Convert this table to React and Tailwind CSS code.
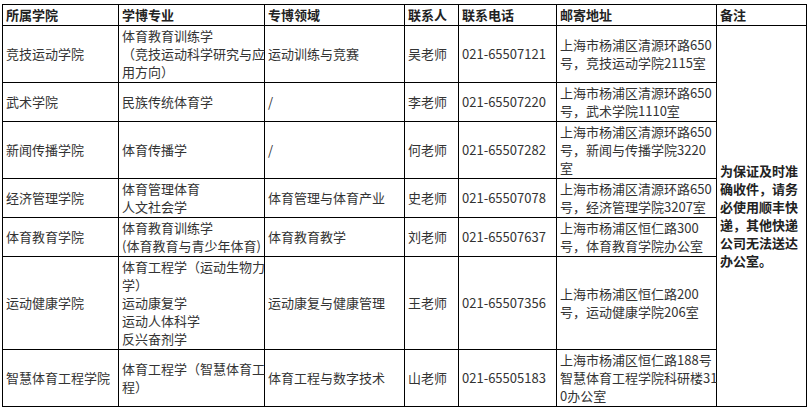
const ROWS = [
  {
    school: '竞技运动学院',
    major: ['体育教育训练学', '（竞技运动科学研究与应', '用方向）'],
    field: ['运动训练与竞赛'],
    contact: '吴老师',
    phone: '021-65507121',
    address: ['上海市杨浦区清源环路650', '号，竞技运动学院2115室'],
  },
  {
    school: '武术学院',
    major: ['民族传统体育学'],
    field: ['/'],
    contact: '李老师',
    phone: '021-65507220',
    address: ['上海市杨浦区清源环路650', '号，武术学院1110室'],
  },
  {
    school: '新闻传播学院',
    major: ['体育传播学'],
    field: ['/'],
    contact: '何老师',
    phone: '021-65507282',
    address: ['上海市杨浦区清源环路650', '号，新闻与传播学院3220', '室'],
  },
  {
    school: '经济管理学院',
    major: ['体育管理体育', '人文社会学'],
    field: ['体育管理与体育产业'],
    contact: '史老师',
    phone: '021-65507078',
    address: ['上海市杨浦区清源环路650', '号，经济管理学院3207室'],
  },
  {
    school: '体育教育学院',
    major: ['体育教育训练学', '(体育教育与青少年体育)'],
    field: ['体育教育教学'],
    contact: '刘老师',
    phone: '021-65507637',
    address: ['上海市杨浦区恒仁路300', '号，体育教育学院办公室'],
  },
  {
    school: '运动健康学院',
    major: ['体育工程学（运动生物力', '学）', '运动康复学', '运动人体科学', '反兴奋剂学'],
    field: ['运动康复与健康管理'],
    contact: '王老师',
    phone: '021-65507356',
    address: ['上海市杨浦区恒仁路200', '号，运动健康学院206室'],
  },
  {
    school: '智慧体育工程学院',
    major: ['体育工程学（智慧体育工', '程）'],
    field: ['体育工程与数字技术'],
    contact: '山老师',
    phone: '021-65505183',
    address: ['上海市杨浦区恒仁路188号', '智慧体育工程学院科研楼31', '0办公室'],
  },
]

const NOTE = ['为保证及时准', '确收件，请务', '必使用顺丰快', '递，其他快递', '公司无法送达', '办公室。']

function Lines({ lines }) {
  return lines.map((l, i) => (
    <span key={i} className="block whitespace-nowrap">{l}</span>
  ))
}

const cell = 'border border-black px-[3px] py-px align-middle text-left'

export default function App() {
  return (
    <div className="min-h-[410px] w-[808px] bg-white pl-[2px] pt-[4px]">
      <table
        className="w-[804px] table-fixed border-collapse text-[13px] leading-[18px] text-[#333]"
        style={{ fontFamily: '"Noto Sans CJK SC", "Noto Sans", sans-serif' }}
      >
        <colgroup>
          <col className="w-[116px]" />
          <col className="w-[146px]" />
          <col className="w-[140px]" />
          <col className="w-[54px]" />
          <col className="w-[98px]" />
          <col className="w-[160px]" />
          <col className="w-[90px]" />
        </colgroup>
        <thead>
          <tr className="font-bold text-[#222]">
            <th className={cell}>所属学院</th>
            <th className={cell}>学博专业</th>
            <th className={cell}>专博领域</th>
            <th className={cell}>联系人</th>
            <th className={cell}>联系电话</th>
            <th className={cell}>邮寄地址</th>
            <th className={cell}>备注</th>
          </tr>
        </thead>
        <tbody>
          {ROWS.map((r, i) => (
            <tr key={r.school}>
              <td className={cell}>{r.school}</td>
              <td className={cell}><Lines lines={r.major} /></td>
              <td className={cell}><Lines lines={r.field} /></td>
              <td className={cell}>{r.contact}</td>
              <td className={cell}>{r.phone}</td>
              <td className={cell}><Lines lines={r.address} /></td>
              {i === 0 && (
                <td rowSpan={ROWS.length} className={`${cell} font-bold text-[#222]`}>
                  <Lines lines={NOTE} />
                </td>
              )}
            </tr>
          ))}
        </tbody>
      </table>
    </div>
  )
}
